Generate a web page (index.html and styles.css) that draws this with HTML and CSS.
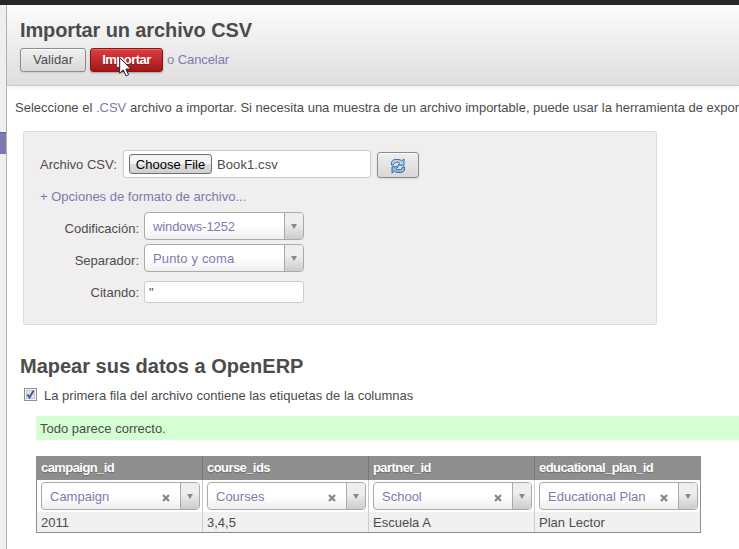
FILE: index.html
```html
<!DOCTYPE html>
<html lang="es">
<head>
<meta charset="utf-8">
<title>Importar un archivo CSV</title>
<link rel="stylesheet" href="styles.css">
</head>
<body>
<div class="topbar"></div>
<div class="shell">
  <aside class="sidebar"><div class="active-item"></div></aside>
  <main class="content">
    <header class="header">
      <h1>Importar un archivo CSV</h1>
      <div class="actions">
        <button class="btn validate">Validar</button>
        <button class="btn primary">Importar</button>
        <span class="cancel">o <a>Cancelar</a></span>
      </div>
    </header>
    <p class="intro">Seleccione el <a>.CSV</a> archivo a importar. Si necesita una muestra de un archivo importable, puede usar la herramienta de expor</p>
    <section class="panel">
      <div class="file-row">
        <span class="file-label">Archivo CSV:</span>
        <div class="file-input"><button class="choose">Choose File</button><span class="filename">Book1.csv</span></div>
        <button class="btn refresh" aria-label="Recargar">
          <svg width="16" height="16" viewBox="0 0 16 16">
            <path d="M1.500 7V5.200C1.500 3 3.200 1.500 5.400 1.500h2.800c1.500 0 2.600.5 3.400 1.400L14 1v6.200H7.800l2-2C9.200 4.500 8.300 4.100 7 4.200 5 4.300 4.300 5 3.500 7Z" fill="#b9d5ee" stroke="#3568a8"/>
            <path d="M14.500 9v1.800c0 2.200-1.700 3.700-3.900 3.700H7.800c-1.500 0-2.600-.5-3.400-1.400L2 15V8.800h6.200l-2 2c.6.700 1.500 1.100 2.800 1 2-.1 2.700-.8 3.500-2.800Z" fill="#8db8e0" stroke="#3568a8"/>
          </svg>
        </button>
      </div>
      <a class="options-link">+ Opciones de formato de archivo...</a>
      <div class="field"><label>Codificación:</label><div class="select"><span class="encoding">windows-1252</span><i class="arrow"></i></div></div>
      <div class="field"><label>Separador:</label><div class="select"><span class="separator">Punto y coma</span><i class="arrow"></i></div></div>
      <div class="field"><label>Citando:</label><div class="quote">"</div></div>
    </section>
    <h2>Mapear sus datos a OpenERP</h2>
    <div class="check-row">
      <svg class="checkbox" width="13" height="13" viewBox="0 0 13 13">
        <rect x=".5" y=".5" width="12" height="12" fill="#f4f4f4" stroke="#8e8f8f"/>
        <rect x="2.500" y="2.500" width="8" height="8" fill="#dfe2e7" stroke="#c3c8d0"/>
        <path d="M3.500 6.500 5.500 9.500 9.500 2.800" fill="none" stroke="#4257a0" stroke-width="2"/>
      </svg>
      <span>La primera fila del archivo contiene las etiquetas de la columnas</span>
    </div>
    <div class="success">Todo parece correcto.</div>
    <table class="grid">
      <colgroup><col class="first"><col><col><col></colgroup>
      <thead><tr><th>campaign_id</th><th>course_ids</th><th>partner_id</th><th>educational_plan_id</th></tr></thead>
      <tbody>
        <tr class="map">
          <td><div class="select"><span>Campaign</span><svg class="clear" viewBox="0 0 8 8"><path d="M1 1 7 7M7 1 1 7"/></svg><i class="arrow"></i></div></td>
          <td><div class="select"><span>Courses</span><svg class="clear" viewBox="0 0 8 8"><path d="M1 1 7 7M7 1 1 7"/></svg><i class="arrow"></i></div></td>
          <td><div class="select"><span>School</span><svg class="clear" viewBox="0 0 8 8"><path d="M1 1 7 7M7 1 1 7"/></svg><i class="arrow"></i></div></td>
          <td><div class="select"><span>Educational Plan</span><svg class="clear" viewBox="0 0 8 8"><path d="M1 1 7 7M7 1 1 7"/></svg><i class="arrow"></i></div></td>
        </tr>
        <tr class="data"><td>2011</td><td>3,4,5</td><td>Escuela A</td><td>Plan Lector</td></tr>
      </tbody>
    </table>
  </main>
</div>
<svg class="cursor" width="13" height="20" viewBox="0 0 13 20"><path d="M.7.700v15.600l3.600-3.400 2.700 6 2.600-1.200-2.700-5.700h5Z" fill="#fff" stroke="#20203a"/></svg>
</body>
</html>
```
FILE: styles.css
```css
* { box-sizing: border-box; }
body {
  margin: 0;
  height: 549px;
  overflow: hidden;
  background: #fff;
  color: #4c4c4c;
  font: 13px/16px "Liberation Sans", Arial, sans-serif;
}
a { color: #7c7bad; }
button { font: inherit; margin: 0; }
.topbar { height: 5px; background: #282828; }
.shell { display: flex; height: 544px; }
.sidebar {
  flex: 0 0 7px;
  padding-top: 127px;
  background: #f0eeee;
  border-right: 1px solid #afafb6;
}
.active-item { height: 22px; background: #7c7bad; border-top: 1px solid #62619a; }
.content { flex: 1; min-width: 0; overflow: hidden; }
.header {
  height: 81px;
  padding: 12px 13px 0;
  background: linear-gradient(#fcfcfc, #dedede);
  border-bottom: 1px solid #cacaca;
  box-shadow: 0 1px 5px rgba(0, 0, 0, .08);
}
h1, h2 { margin: 0; font-size: 20px; line-height: 26px; white-space: nowrap; }
h1 { letter-spacing: -.11px; }
.actions { display: flex; align-items: center; margin-top: 5px; height: 24px; gap: 4px; }
.btn {
  height: 24px;
  padding: 0;
  border: 1px solid #8c8c8c;
  border-radius: 3px;
  background: linear-gradient(#efefef, #d8d8d8);
  box-shadow: 0 1px 2px rgba(0, 0, 0, .1), inset 0 1px rgba(255, 255, 255, .8);
  color: #4c4c4c;
  text-align: center;
}
.validate { width: 66px; letter-spacing: .1px; }
.primary {
  width: 73px;
  border-color: #8b1515;
  background: linear-gradient(#dc3f42, #a41518);
  box-shadow: 0 1px 2px rgba(0, 0, 0, .3), inset 0 1px rgba(255, 155, 155, .4);
  color: #fff;
  font-weight: bold;
  letter-spacing: -.5px;
  text-shadow: 0 1px 1px rgba(0, 0, 0, .3);
}
.cancel { color: #8a89a0; letter-spacing: -.08px; }
.intro { margin: 14px 0 0 8px; white-space: nowrap; }
.panel {
  width: 634px;
  height: 194px;
  margin: 15px 0 0 16px;
  padding: 18px 16px 0;
  background: #f0eeee;
  border: 1px solid #dcdcdc;
  border-radius: 2px;
}
.file-row { display: flex; height: 28px; align-items: center; }
.file-label { width: 83px; padding-top: 2px; white-space: nowrap; }
.file-input {
  display: flex;
  align-items: center;
  width: 248px;
  height: 28px;
  padding-left: 5px;
  background: #fff;
  border: 1px solid #ccc;
  border-radius: 3px;
}
.choose {
  width: 83px;
  height: 20px;
  padding: 1px 0 0;
  border: 1px solid #707070;
  border-radius: 3px;
  background: linear-gradient(#f3f3f3 0 50%, #dddddd 50%, #cfcfcf);
  color: #000;
}
.filename { margin-left: 5px; padding-top: 1px; letter-spacing: .1px; }
.refresh { display: grid; place-items: center; width: 42px; height: 26px; margin: 2px 0 0 6px; padding-top: 2px; }
.options-link { display: block; margin: 11px 0 7px; white-space: nowrap; }
.field { display: flex; height: 32px; }
.field label { width: 99px; padding-top: 9px; margin-right: 5px; text-align: right; }
.select {
  display: flex;
  align-items: center;
  width: 160px;
  height: 28px;
  border: 1px solid #aaa;
  border-radius: 4px;
  background: linear-gradient(#fff 50%, #eee);
  color: #7c7bad;
  overflow: hidden;
}
.select span { flex: 1; padding: 1px 0 0 8px; white-space: nowrap; }
.encoding { letter-spacing: -.1px; }
.separator { letter-spacing: .15px; }
.arrow {
  display: grid;
  place-items: center;
  width: 19px;
  height: 26px;
  border-left: 1px solid #aaa;
  background: linear-gradient(#eee 40%, #ccc);
}
.arrow::after { content: ""; border: 3px solid transparent; border-top: 5px solid #888; border-bottom: 0; }
.quote {
  width: 160px;
  height: 22px;
  margin-top: 5px;
  padding: 3px 4px;
  border: 1px solid #ccc;
  border-radius: 3px;
  background: #fff;
}
h2 { margin: 28px 0 0 13px; }
.check-row { display: flex; align-items: center; margin: 9px 0 0 17px; height: 16px; white-space: nowrap; }
.checkbox { margin: -3px 7px 0 0; }
.success {
  height: 24px;
  margin: 12px 0 16px 29px;
  padding: 5px 4px 3px;
  border-radius: 3px 0 0 3px;
  background: #d3ffd3;
}
.grid {
  width: 665px;
  margin-left: 29px;
  table-layout: fixed;
  border-collapse: separate;
  border-spacing: 0;
  border: 1px solid #8e8e8e;
  border-top: 0;
}
.grid col { width: 166px; }
.grid col.first { width: 165px; }
.grid th {
  height: 24px;
  padding: 0 4px;
  background: #8e8e8e;
  color: #fff;
  text-align: left;
  text-shadow: 0 1px 1px rgba(0, 0, 0, .25);
  white-space: nowrap;
  letter-spacing: -.57px;
}
.grid th + th { border-left: 1px solid #777; }
.grid td { padding: 0 4px; border-left: 1px solid #ccc; }
.grid td:first-child { border-left: 0; }
.map td { height: 32px; }
.map .select { width: 159px; }
.grid .data td { height: 20px; padding-top: 2px; background: #f0f0f0; }
.clear { width: 8px; height: 8px; margin: 3px 10px 0 0; fill: none; stroke: #8a8a8a; stroke-width: 2.400; }
.cursor { position: absolute; left: 119px; top: 57px; }
```
